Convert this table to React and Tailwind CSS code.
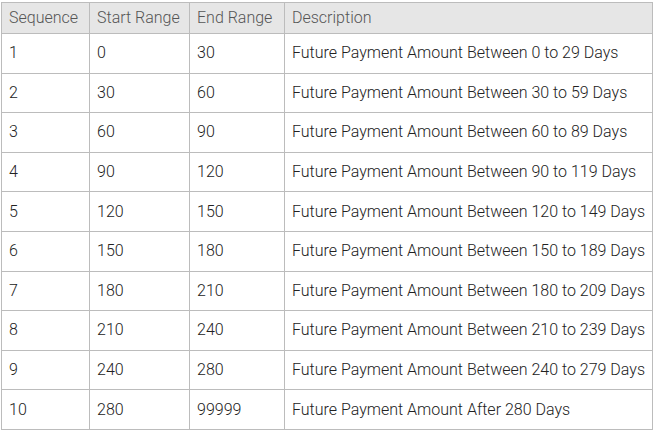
const rows = [
  [1, 0, 30, "Future Payment Amount Between 0 to 29 Days"],
  [2, 30, 60, "Future Payment Amount Between 30 to 59 Days"],
  [3, 60, 90, "Future Payment Amount Between 60 to 89 Days"],
  [4, 90, 120, "Future Payment Amount Between 90 to 119 Days"],
  [5, 120, 150, "Future Payment Amount Between 120 to 149 Days"],
  [6, 150, 180, "Future Payment Amount Between 150 to 189 Days"],
  [7, 180, 210, "Future Payment Amount Between 180 to 209 Days"],
  [8, 210, 240, "Future Payment Amount Between 210 to 239 Days"],
  [9, 240, 280, "Future Payment Amount Between 240 to 279 Days"],
  [10, 280, 99999, "Future Payment Amount After 280 Days"],
];

export default function App() {
  return (
    <div className="w-[658px] h-[432px] bg-white pt-[2px] pl-[1px] font-['Roboto',sans-serif]">
      <table className="border-collapse table-fixed w-[652px] text-[16px] font-light">
        <colgroup>
          <col className="w-[88px]" />
          <col className="w-[100px]" />
          <col className="w-[95px]" />
          <col />
        </colgroup>
        <thead>
          <tr className="h-[31px] bg-[#e6e6e6] text-[#555]">
            <th className="border border-[#bcbcbc] px-[7px] text-left font-light">Sequence</th>
            <th className="border border-[#bcbcbc] px-[7px] text-left font-light">Start Range</th>
            <th className="border border-[#bcbcbc] px-[7px] text-left font-light">End Range</th>
            <th className="border border-[#bcbcbc] px-[7px] text-left font-light">Description</th>
          </tr>
        </thead>
        <tbody className="text-[#222]">
          {rows.map((r) => (
            <tr key={r[0]} className="h-[39.6px]">
              <td className="border border-[#bcbcbc] px-[7px]">{r[0]}</td>
              <td className="border border-[#bcbcbc] px-[7px]">{r[1]}</td>
              <td className="border border-[#bcbcbc] px-[7px]">{r[2]}</td>
              <td className="border border-[#bcbcbc] px-[7px] whitespace-nowrap">{r[3]}</td>
            </tr>
          ))}
        </tbody>
      </table>
    </div>
  );
}
